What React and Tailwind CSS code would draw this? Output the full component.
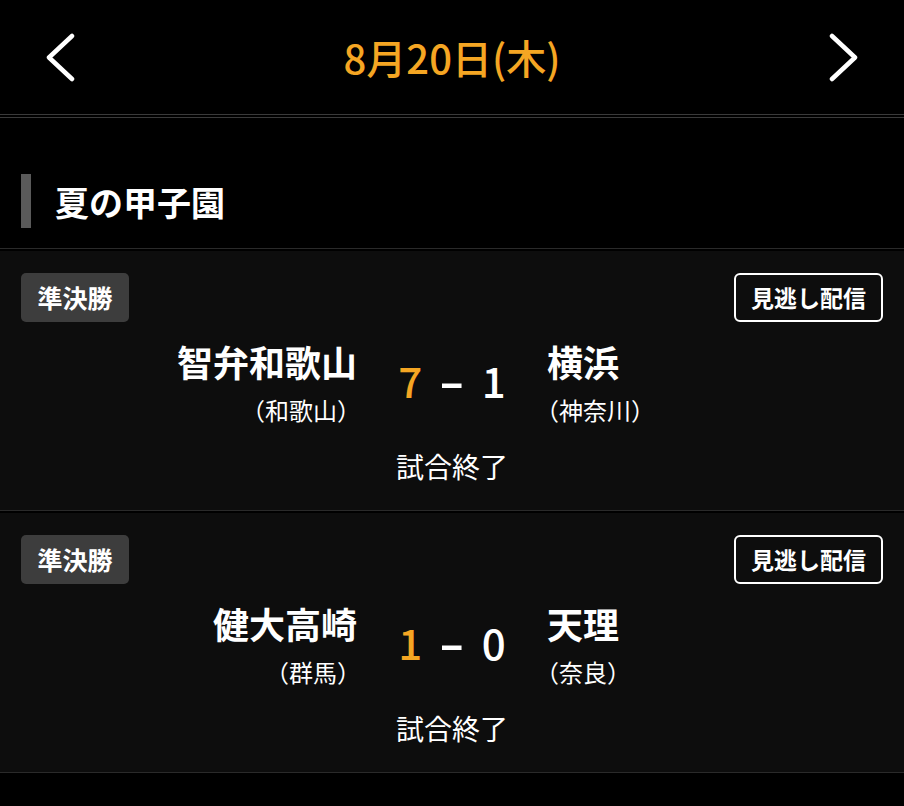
import React from 'react';

const games = [
  {
    id: 1,
    round: '準決勝',
    home: '智弁和歌山',
    homePref: '（和歌山）',
    away: '横浜',
    awayPref: '（神奈川）',
    homeScore: 7,
    awayScore: 1,
    status: '試合終了',
  },
  {
    id: 2,
    round: '準決勝',
    home: '健大高崎',
    homePref: '（群馬）',
    away: '天理',
    awayPref: '（奈良）',
    homeScore: 1,
    awayScore: 0,
    status: '試合終了',
  },
];

const Chevron = ({ dir }) => (
  <svg width="32" height="50" viewBox="0 0 32 50" fill="none">
    <polyline
      points={dir === 'left' ? '26,4 3,25.5 26,47' : '6,4 29,25.5 6,47'}
      stroke="white"
      strokeWidth="4.5"
      strokeLinecap="round"
      strokeLinejoin="round"
    />
  </svg>
);

const GameCard = ({ game }) => (
  <div className="border-t border-[#2a2a2a] pt-[2px] bg-black">
    <div className="h-[259px] bg-[#0d0d0d] px-[21px] pt-[22px]">
      <div className="flex items-start justify-between">
        <span className="h-[49px] w-[108px] rounded-[5px] bg-[#3d3d3d] flex items-center justify-center text-[25px] font-bold text-white">
          {game.round}
        </span>
        <button className="h-[49px] w-[149px] rounded-[6px] border-2 border-white flex items-center justify-center text-[23px] font-bold text-white">
          見逃し配信
        </button>
      </div>

      <div className="grid grid-cols-[1fr_190px_1fr] mt-[18px] -mx-[21px]">
        <div className="text-right">
          <p className="text-[36px] font-bold leading-[43px] text-white">{game.home}</p>
          <p className="text-[24px] leading-[32px] mt-[11px] text-white -mr-[4px]">{game.homePref}</p>
        </div>
        <div className="flex items-center justify-center gap-[22px] pb-[8px] text-[42px] font-medium text-white">
          <span className="text-[#f5a623]">{game.homeScore}</span>
          <span className="inline-block scale-x-[1.7] font-bold">-</span>
          <span>{game.awayScore}</span>
        </div>
        <div className="text-left">
          <p className="text-[36px] font-bold leading-[43px] text-white">{game.away}</p>
          <p className="text-[24px] leading-[32px] mt-[11px] text-white -ml-[12px]">{game.awayPref}</p>
        </div>
      </div>

      <p className="text-center text-[28px] leading-[36px] mt-[22px] text-white">{game.status}</p>
    </div>
  </div>
);

const App = () => {
  return (
    <div
      className="w-[904px] h-[806px] bg-black overflow-hidden"
      style={{ fontFamily: '"Noto Sans CJK JP", "Noto Sans", sans-serif' }}
    >
      <header className="h-[114px] flex items-center justify-between px-[46px]">
        <Chevron dir="left" />
        <h1 className="text-[40px] font-medium text-[#f5a623]">8月20日(木)</h1>
        <Chevron dir="right" />
      </header>
      <div className="border-t border-[#3a3a3a]" />
      <div className="border-t border-[#3a3a3a] mt-[2px]" />

      <div className="pt-[56px] pb-[20px] px-[21px] flex items-center gap-[24px]">
        <div className="w-[10px] h-[54px] bg-[#5a5a5a]" />
        <h2 className="text-[34px] font-bold text-white">夏の甲子園</h2>
      </div>

      {games.map((game) => (
        <GameCard key={game.id} game={game} />
      ))}
      <div className="border-t border-[#2a2a2a]" />
    </div>
  );
};

export default App;
